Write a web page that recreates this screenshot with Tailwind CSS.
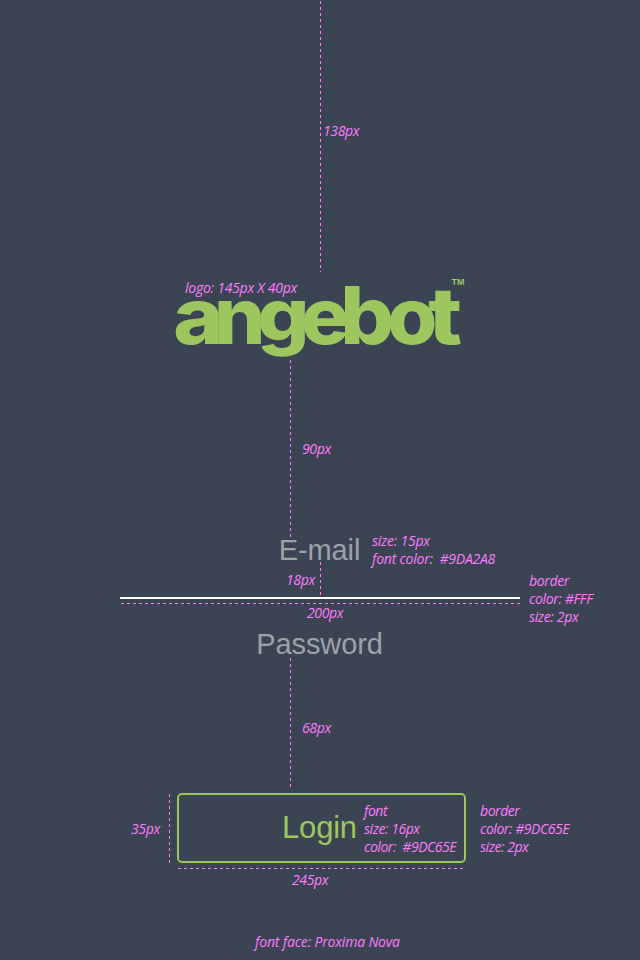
<!DOCTYPE html>
<html lang="en">
<head>
<meta charset="utf-8">
<title>angebot login</title>
<script src="https://cdn.jsdelivr.net/npm/@tailwindcss/browser@4"></script>
</head>
<body class="bg-[#3b4453]">
<main class="relative flex flex-col items-center w-[640px] h-[960px] overflow-hidden bg-[#3b4453] font-['Liberation_Sans',sans-serif]">
  
  <svg class="mt-[265px] h-[100px] w-[310px] shrink-0 font-['Inter',sans-serif]" viewBox="0 0 310 100" fill="#9dc65e" role="img" aria-label="angebot">
    <g font-size="77" font-weight="800">
      <text transform="translate(8.2 79) scale(1.11 1.02)">a</text>
      <text transform="translate(49 79) scale(1.05 1.02)">n</text>
      <text transform="translate(92.3 76) scale(1.06 .95)">g</text>
      <text transform="translate(136 79) scale(1.05 1.02)">e</text>
      <text transform="translate(175.3 79) scale(1.1 1.03)">b</text>
      <text transform="translate(222.2 79) scale(1.05 1.02)">o</text>
      <text transform="translate(263 79) scale(1.16 1.02)">t</text>
    </g>
    <text class="font-['Liberation_Sans',sans-serif]" x="286.5" y="20" font-size="9" font-weight="700" textLength="13">TM</text>
  </svg>

  <!-- Form -->
  <form class="flex flex-col items-center w-full">
    <label class="mt-[169px] mr-px h-8 text-[29px] leading-8 tracking-[-0.1px] text-[#9da2a8]">E-mail</label>
    <div class="mt-[31px] h-0.5 w-[400px] bg-white"></div>
    <label class="mt-[29px] mr-px h-8 text-[29px] leading-8 tracking-[-0.1px] text-[#9da2a8]">Password</label>
    <button type="button" class="mt-[133px] ml-[3px] flex h-[70px] w-[289px] items-center justify-center rounded-[5px] border-2 border-[#9dc65e] pr-1 text-[31px] tracking-[-0.2px] text-[#9dc65e]">Login</button>
  </form>

  <!-- Measurements and notes over the screen -->
  <div class="absolute inset-0 whitespace-pre font-['Open_Sans',sans-serif] text-[14px] leading-[18px] italic tracking-[-0.35px] text-[#ff7bff]">
    <i class="absolute left-[320px] top-px h-[271px] w-px bg-[repeating-linear-gradient(to_bottom,#ff7bff_0_3px,transparent_3px_6px)]"></i>
    <i class="absolute left-[290px] top-[360px] h-[177px] w-px bg-[repeating-linear-gradient(to_bottom,#ff7bff_0_3px,transparent_3px_6px)]"></i>
    <i class="absolute left-[320px] top-[562px] h-[33px] w-px bg-[repeating-linear-gradient(to_bottom,#ff7bff_0_3px,transparent_3px_6px)]"></i>
    <i class="absolute left-[290px] top-[658px] h-[132px] w-px bg-[repeating-linear-gradient(to_bottom,#ff7bff_0_3px,transparent_3px_6px)]"></i>
    <i class="absolute left-[169px] top-[794px] h-[69px] w-px bg-[repeating-linear-gradient(to_bottom,#ff7bff_0_3px,transparent_3px_6px)]"></i>
    <i class="absolute left-[121px] top-[603px] h-px w-[399px] bg-[repeating-linear-gradient(to_right,#ff7bff_0_3px,transparent_3px_6px)]"></i>
    <i class="absolute left-[178px] top-[868px] h-px w-[285px] bg-[repeating-linear-gradient(to_right,#ff7bff_0_3px,transparent_3px_6px)]"></i>
    <p class="absolute left-[323px] top-[122px]">138px</p>
    <p class="absolute left-[185px] top-[279px] tracking-[-0.25px]">logo: 145px X 40px</p>
    <p class="absolute left-[302px] top-[440px]">90px</p>
    <p class="absolute left-[372px] top-[532px] tracking-[-0.23px]">size: 15px
font color:  #9DA2A8</p>
    <p class="absolute left-[286px] top-[571px]">18px</p>
    <p class="absolute left-[307px] top-[604px]">200px</p>
    <p class="absolute left-[529px] top-[572px]">border
color: #FFF
size: 2px</p>
    <p class="absolute left-[302px] top-[719px]">68px</p>
    <p class="absolute left-[131px] top-[820px]">35px</p>
    <p class="absolute left-[364px] top-[802px] tracking-[-0.45px]">font
size: 16px
color:  #9DC65E</p>
    <p class="absolute left-[480px] top-[802px] tracking-[-0.45px]">border
color: #9DC65E
size: 2px</p>
    <p class="absolute left-[292px] top-[871px]">245px</p>
    <p class="absolute left-[255px] top-[933px] tracking-[-0.17px]">font face: Proxima Nova</p>
  </div>
</main>
</body>
</html>
